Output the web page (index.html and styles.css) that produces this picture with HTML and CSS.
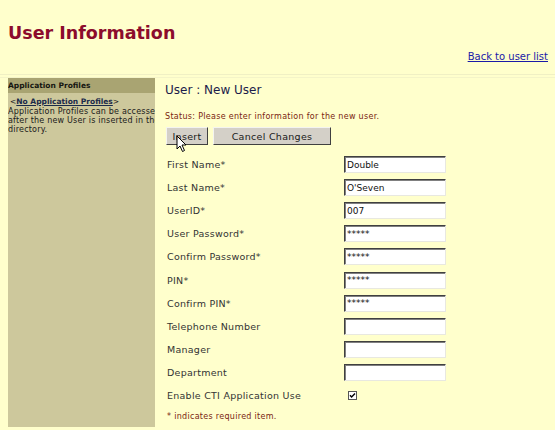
FILE: index.html
```html
<!DOCTYPE html>
<html>
<head>
<meta charset="utf-8">
<link rel="stylesheet" href="styles.css">
</head>
<body>
<header class="top">
  <h1 class="title">User Information</h1>
  <div class="backrow"><a href="#" class="back">Back to user list</a></div>
</header>
<div class="rule"></div>
<div class="layout">
  <aside class="side">
    <div class="side-head">Application Profiles</div>
    <div class="side-link">&lt;<a href="#">No Application Profiles</a>&gt;</div>
    <div class="side-text">
      <div>Application Profiles can be accessed</div>
      <div>after the new User is inserted in the</div>
      <div>directory.</div>
    </div>
  </aside>
  <main class="main">
    <h2 class="sub">User : New User</h2>
    <p class="status">Status: Please enter information for the new user.</p>
    <div class="buttons">
      <button class="btn btn-insert">Insert</button>
      <button class="btn btn-cancel">Cancel Changes</button>
      <svg class="cursor" width="12" height="18" viewBox="0 0 12 18"><path d="M1 1 L1 14 L4 11 L6.5 16.5 L8.5 15.5 L6 10 L10 10 Z" fill="#fff" stroke="#000" stroke-width="1"/></svg>
    </div>
    <div class="form">
      <label>First Name*</label><input class="field" value="Double">
      <label>Last Name*</label><input class="field" value="O'Seven">
      <label>UserID*</label><input class="field" value="007">
      <label>User Password*</label><input class="field" value="*****">
      <label>Confirm Password*</label><input class="field" value="*****">
      <label>PIN*</label><input class="field" value="*****">
      <label>Confirm PIN*</label><input class="field" value="*****">
      <label>Telephone Number</label><input class="field" value="">
      <label>Manager</label><input class="field" value="">
      <label>Department</label><input class="field" value="">
      <label>Enable CTI Application Use</label><span class="check"><svg width="9" height="9" viewBox="0 0 9 9"><rect x="0.5" y="0.5" width="8" height="8" fill="#fff" stroke="#555"/><path d="M2 4.2 L3.6 6 L7 2.5" fill="none" stroke="#000" stroke-width="1.4"/></svg></span>
    </div>
    <p class="note">* indicates required item.</p>
  </main>
</div>
</body>
</html>
```
FILE: styles.css
```css
html, body {
  margin: 0;
  padding: 0;
  background: #ffffcc;
  font-family: "DejaVu Sans", Verdana, sans-serif;
  width: 555px;
  height: 430px;
  overflow: hidden;
}
.top {
  padding: 0 7px 0 8px;
}
.title {
  margin: 0;
  padding-top: 21px;
  font-size: 17.5px;
  line-height: 24px;
  font-weight: bold;
  color: #8c0c2c;
}
.backrow {
  text-align: right;
  margin-top: 5px;
  font-size: 10px;
  line-height: 14px;
}
.back {
  font-size: 10px;
  color: #1a1aa8;
  text-decoration: underline;
}
.rule {
  margin-top: 10px;
  height: 2px;
  border-top: 1px solid #f0f0c4;
  border-bottom: 1px solid #f4f4c8;
}
.layout {
  display: flex;
  height: 349px;
}
.side {
  margin-left: 8px;
  width: 147px;
  background: #cdc89c;
  overflow: hidden;
  flex: none;
}
.side-head {
  background: #a9a472;
  height: 15px;
  line-height: 15px;
  font-size: 7.5px;
  font-weight: bold;
  color: #151510;
  white-space: nowrap;
}
.side-link {
  font-size: 7.5px;
  padding: 4px 0 0 2px;
  color: #222;
  line-height: 10px;
  white-space: nowrap;
}
.side-link a {
  color: #1a2a4a;
  font-weight: bold;
  text-decoration: underline;
}
.side-text {
  font-size: 8px;
  letter-spacing: 0.2px;
  line-height: 9px;
  color: #1a1a1a;
  white-space: nowrap;
}
.main {
  padding-left: 10px;
  flex: 1;
}
.sub {
  margin: 0;
  padding-top: 4px;
  font-size: 12px;
  line-height: 16px;
  font-weight: normal;
  color: #1c1c4a;
}
.status {
  margin: 14px 0 0 0;
  font-size: 8px;
  letter-spacing: 0.3px;
  line-height: 10px;
  color: #7a1e10;
}
.buttons {
  position: relative;
  display: flex;
  gap: 5px;
  margin-top: 5px;
  margin-left: 1px;
}
.btn {
  height: 18px;
  background: #d4d0c8;
  border: 1px solid;
  border-color: #f4f4f0 #404040 #404040 #f4f4f0;
  font-family: "DejaVu Sans", Verdana, sans-serif;
  font-size: 9.5px;
  letter-spacing: 0.3px;
  color: #1a1a1a;
  padding: 0;
}
.btn-insert { width: 42px; }
.btn-cancel { width: 118px; }
.cursor {
  position: absolute;
  left: 10px;
  top: 8px;
}
.form {
  display: grid;
  grid-template-columns: 177px 102px;
  grid-auto-rows: 23.1px;
  align-items: center;
  margin-top: 8px;
  margin-left: 2px;
}
.form label {
  font-size: 9.5px;
  letter-spacing: 0.25px;
  color: #333;
}
.field {
  box-sizing: border-box;
  width: 102px;
  height: 17px;
  border: 1px solid;
  border-color: #404040 #e8e8e0 #e8e8e0 #404040;
  box-shadow: inset 1px 1px 0 #808080;
  background: #fff;
  font-family: "DejaVu Sans", Verdana, sans-serif;
  font-size: 9px;
  padding: 0 2px;
  color: #111;
}
.check {
  display: flex;
  padding-left: 4px;
}
.note {
  margin: 5px 0 0 2px;
  font-size: 8px;
  letter-spacing: 0.3px;
  color: #7a1e10;
}
```
